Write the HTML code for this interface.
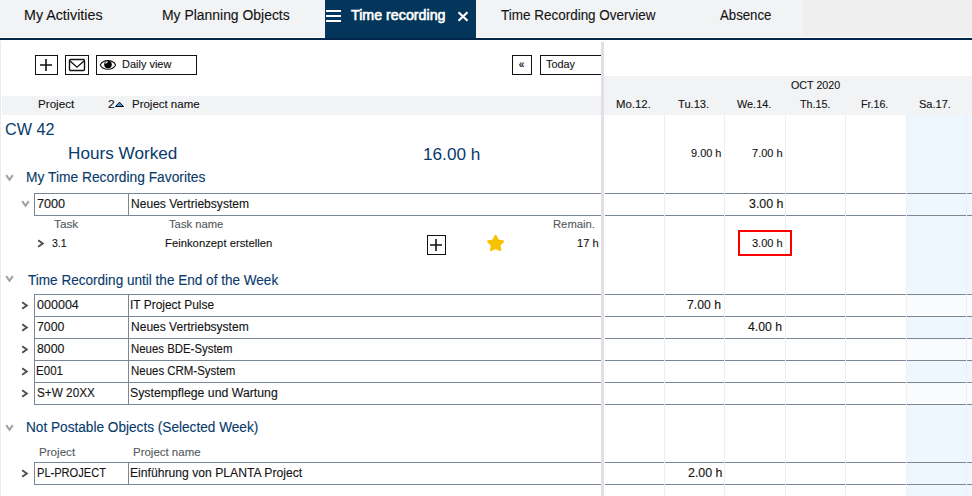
<!DOCTYPE html>
<html><head><meta charset="utf-8"><style>
html,body{margin:0;padding:0;width:972px;height:496px;overflow:hidden;background:#fff;}
body{position:relative;font-family:"Liberation Sans",sans-serif;}
.a{position:absolute;}
.tx{position:absolute;white-space:nowrap;transform-origin:0 0;-webkit-text-stroke:0.12px currentColor;}
.bl{display:inline-block;width:0;height:0;}
</style></head>
<body>
<!-- tab bar -->
<div class="a" style="left:0;top:0;width:803px;height:37px;background:#f2f3f5"></div>
<div class="a" style="left:803px;top:0;width:169px;height:37px;background:#efefef"></div>
<div class="a" style="left:0;top:38px;width:972px;height:2px;background:#00264b"></div>
<div class="a" style="left:325px;top:0;width:151px;height:38px;background:#04365b"></div>
<div class="a" style="left:326px;top:10px;width:14.6px;height:2px;background:#fff"></div>
<div class="a" style="left:326px;top:15px;width:14.6px;height:2px;background:#fff"></div>
<div class="a" style="left:326px;top:20px;width:14.6px;height:2px;background:#fff"></div>
<svg class="a" style="left:456px;top:10px" width="14" height="13" viewBox="0 0 14 13"><path d="M2.5 2.3 L11.5 10.8 M11.5 2.3 L2.5 10.8" stroke="#fff" stroke-width="2.2" fill="none"/></svg>
<!-- left strip -->
<div class="a" style="left:0;top:41px;width:1px;height:455px;background:#ebebeb"></div>
<!-- toolbar buttons -->
<div class="a" style="left:35px;top:55px;width:21px;height:18px;border:1px solid #111"></div>
<svg class="a" style="left:39px;top:58px" width="14" height="14" viewBox="0 0 14 14"><path d="M1 7 H13 M7 1 V13" stroke="#111" stroke-width="1.6" fill="none"/></svg>
<div class="a" style="left:65px;top:55px;width:22px;height:18px;border:1px solid #111"></div>
<svg class="a" style="left:68px;top:58px" width="18" height="14" viewBox="0 0 18 14"><rect x="1.5" y="1.5" width="15" height="11" rx="1.2" fill="none" stroke="#111" stroke-width="1.4"/><path d="M2 3 L9 9.2 L16 3" fill="none" stroke="#111" stroke-width="1.3"/></svg>
<div class="a" style="left:96px;top:55px;width:99px;height:18px;border:1px solid #111"></div>
<svg class="a" style="left:99px;top:59px" width="18" height="12" viewBox="0 0 18 12"><path d="M1.2 5.9 C4 0.2, 13.8 0.2, 16.6 5.9 C13.8 11.6, 4 11.6, 1.2 5.9 Z" fill="none" stroke="#111" stroke-width="1.05"/><circle cx="9" cy="5.5" r="3.8" fill="#000"/><path d="M6.6 4.6 Q7 3 8.6 2.6" fill="none" stroke="#fff" stroke-width="1.1"/></svg>
<div class="a" style="left:512px;top:55px;width:18px;height:18px;border:1px solid #111"></div>
<div class="a" style="left:518.8px;top:57.5px;font-size:10px;line-height:14px;color:#000;-webkit-text-stroke:0.2px #000">&laquo;</div>
<div class="a" style="left:540px;top:55px;width:62px;height:18px;border:1px solid #111;border-right:none"></div>
<!-- headers -->
<div class="a" style="left:2px;top:96px;width:599px;height:19px;background:#f2f3f5"></div>
<div class="a" style="left:604px;top:76px;width:368px;height:39px;background:#f2f3f5"></div>
<svg class="a" style="left:113.5px;top:100px" width="12" height="8" viewBox="0 0 12 8"><path d="M1.5 6.5 L5.5 2.2 L9.5 6.5 Z" fill="#3f9be0" stroke="#000" stroke-width="1"/></svg>
<!-- gantt columns -->
<div class="a" style="left:907px;top:115px;width:65px;height:381px;background:#eef6fe"></div>
<div class="a" style="left:907px;top:295px;width:65px;height:21px;background:#f9fbfe"></div>
<div class="a" style="left:907px;top:339px;width:65px;height:21px;background:#f9fbfe"></div>
<div class="a" style="left:907px;top:383px;width:65px;height:21px;background:#f9fbfe"></div>
<div class="a" style="left:664px;top:115px;width:1px;height:381px;background:#efeff1"></div>
<div class="a" style="left:724px;top:115px;width:1px;height:381px;background:#efeff1"></div>
<div class="a" style="left:785px;top:115px;width:1px;height:381px;background:#efeff1"></div>
<div class="a" style="left:845px;top:115px;width:1px;height:381px;background:#efeff1"></div>
<div class="a" style="left:906px;top:115px;width:1px;height:381px;background:#efeff1"></div>
<div class="a" style="left:966px;top:115px;width:1px;height:381px;background:#efeff1"></div>
<!-- splitter -->
<div class="a" style="left:601px;top:42px;width:3px;height:454px;background:#e3dde8"></div>
<!-- table rows -->
<div class="a" style="left:34px;top:193px;width:567px;height:1px;background:#7b8795"></div>
<div class="a" style="left:605px;top:193px;width:59px;height:1px;background:#7b8795"></div>
<div class="a" style="left:665px;top:193px;width:59px;height:1px;background:#7b8795"></div>
<div class="a" style="left:725px;top:193px;width:60px;height:1px;background:#7b8795"></div>
<div class="a" style="left:786px;top:193px;width:59px;height:1px;background:#7b8795"></div>
<div class="a" style="left:846px;top:193px;width:60px;height:1px;background:#7b8795"></div>
<div class="a" style="left:907px;top:193px;width:59px;height:1px;background:#7b8795"></div>
<div class="a" style="left:967px;top:193px;width:5px;height:1px;background:#7b8795"></div>
<div class="a" style="left:34px;top:215px;width:567px;height:1px;background:#7b8795"></div>
<div class="a" style="left:605px;top:215px;width:59px;height:1px;background:#7b8795"></div>
<div class="a" style="left:665px;top:215px;width:59px;height:1px;background:#7b8795"></div>
<div class="a" style="left:725px;top:215px;width:60px;height:1px;background:#7b8795"></div>
<div class="a" style="left:786px;top:215px;width:59px;height:1px;background:#7b8795"></div>
<div class="a" style="left:846px;top:215px;width:60px;height:1px;background:#7b8795"></div>
<div class="a" style="left:907px;top:215px;width:59px;height:1px;background:#7b8795"></div>
<div class="a" style="left:967px;top:215px;width:5px;height:1px;background:#7b8795"></div>
<div class="a" style="left:34px;top:294px;width:567px;height:1px;background:#7b8795"></div>
<div class="a" style="left:605px;top:294px;width:59px;height:1px;background:#7b8795"></div>
<div class="a" style="left:665px;top:294px;width:59px;height:1px;background:#7b8795"></div>
<div class="a" style="left:725px;top:294px;width:60px;height:1px;background:#7b8795"></div>
<div class="a" style="left:786px;top:294px;width:59px;height:1px;background:#7b8795"></div>
<div class="a" style="left:846px;top:294px;width:60px;height:1px;background:#7b8795"></div>
<div class="a" style="left:907px;top:294px;width:59px;height:1px;background:#7b8795"></div>
<div class="a" style="left:967px;top:294px;width:5px;height:1px;background:#7b8795"></div>
<div class="a" style="left:34px;top:316px;width:567px;height:1px;background:#7b8795"></div>
<div class="a" style="left:605px;top:316px;width:59px;height:1px;background:#7b8795"></div>
<div class="a" style="left:665px;top:316px;width:59px;height:1px;background:#7b8795"></div>
<div class="a" style="left:725px;top:316px;width:60px;height:1px;background:#7b8795"></div>
<div class="a" style="left:786px;top:316px;width:59px;height:1px;background:#7b8795"></div>
<div class="a" style="left:846px;top:316px;width:60px;height:1px;background:#7b8795"></div>
<div class="a" style="left:907px;top:316px;width:59px;height:1px;background:#7b8795"></div>
<div class="a" style="left:967px;top:316px;width:5px;height:1px;background:#7b8795"></div>
<div class="a" style="left:34px;top:338px;width:567px;height:1px;background:#7b8795"></div>
<div class="a" style="left:605px;top:338px;width:59px;height:1px;background:#7b8795"></div>
<div class="a" style="left:665px;top:338px;width:59px;height:1px;background:#7b8795"></div>
<div class="a" style="left:725px;top:338px;width:60px;height:1px;background:#7b8795"></div>
<div class="a" style="left:786px;top:338px;width:59px;height:1px;background:#7b8795"></div>
<div class="a" style="left:846px;top:338px;width:60px;height:1px;background:#7b8795"></div>
<div class="a" style="left:907px;top:338px;width:59px;height:1px;background:#7b8795"></div>
<div class="a" style="left:967px;top:338px;width:5px;height:1px;background:#7b8795"></div>
<div class="a" style="left:34px;top:360px;width:567px;height:1px;background:#7b8795"></div>
<div class="a" style="left:605px;top:360px;width:59px;height:1px;background:#7b8795"></div>
<div class="a" style="left:665px;top:360px;width:59px;height:1px;background:#7b8795"></div>
<div class="a" style="left:725px;top:360px;width:60px;height:1px;background:#7b8795"></div>
<div class="a" style="left:786px;top:360px;width:59px;height:1px;background:#7b8795"></div>
<div class="a" style="left:846px;top:360px;width:60px;height:1px;background:#7b8795"></div>
<div class="a" style="left:907px;top:360px;width:59px;height:1px;background:#7b8795"></div>
<div class="a" style="left:967px;top:360px;width:5px;height:1px;background:#7b8795"></div>
<div class="a" style="left:34px;top:382px;width:567px;height:1px;background:#7b8795"></div>
<div class="a" style="left:605px;top:382px;width:59px;height:1px;background:#7b8795"></div>
<div class="a" style="left:665px;top:382px;width:59px;height:1px;background:#7b8795"></div>
<div class="a" style="left:725px;top:382px;width:60px;height:1px;background:#7b8795"></div>
<div class="a" style="left:786px;top:382px;width:59px;height:1px;background:#7b8795"></div>
<div class="a" style="left:846px;top:382px;width:60px;height:1px;background:#7b8795"></div>
<div class="a" style="left:907px;top:382px;width:59px;height:1px;background:#7b8795"></div>
<div class="a" style="left:967px;top:382px;width:5px;height:1px;background:#7b8795"></div>
<div class="a" style="left:34px;top:404px;width:567px;height:1px;background:#7b8795"></div>
<div class="a" style="left:605px;top:404px;width:59px;height:1px;background:#7b8795"></div>
<div class="a" style="left:665px;top:404px;width:59px;height:1px;background:#7b8795"></div>
<div class="a" style="left:725px;top:404px;width:60px;height:1px;background:#7b8795"></div>
<div class="a" style="left:786px;top:404px;width:59px;height:1px;background:#7b8795"></div>
<div class="a" style="left:846px;top:404px;width:60px;height:1px;background:#7b8795"></div>
<div class="a" style="left:907px;top:404px;width:59px;height:1px;background:#7b8795"></div>
<div class="a" style="left:967px;top:404px;width:5px;height:1px;background:#7b8795"></div>
<div class="a" style="left:34px;top:462px;width:567px;height:1px;background:#7b8795"></div>
<div class="a" style="left:605px;top:462px;width:59px;height:1px;background:#7b8795"></div>
<div class="a" style="left:665px;top:462px;width:59px;height:1px;background:#7b8795"></div>
<div class="a" style="left:725px;top:462px;width:60px;height:1px;background:#7b8795"></div>
<div class="a" style="left:786px;top:462px;width:59px;height:1px;background:#7b8795"></div>
<div class="a" style="left:846px;top:462px;width:60px;height:1px;background:#7b8795"></div>
<div class="a" style="left:907px;top:462px;width:59px;height:1px;background:#7b8795"></div>
<div class="a" style="left:967px;top:462px;width:5px;height:1px;background:#7b8795"></div>
<div class="a" style="left:34px;top:484px;width:567px;height:1px;background:#7b8795"></div>
<div class="a" style="left:605px;top:484px;width:59px;height:1px;background:#7b8795"></div>
<div class="a" style="left:665px;top:484px;width:59px;height:1px;background:#7b8795"></div>
<div class="a" style="left:725px;top:484px;width:60px;height:1px;background:#7b8795"></div>
<div class="a" style="left:786px;top:484px;width:59px;height:1px;background:#7b8795"></div>
<div class="a" style="left:846px;top:484px;width:60px;height:1px;background:#7b8795"></div>
<div class="a" style="left:907px;top:484px;width:59px;height:1px;background:#7b8795"></div>
<div class="a" style="left:967px;top:484px;width:5px;height:1px;background:#7b8795"></div>
<div class="a" style="left:34px;top:193px;width:1px;height:22px;background:#7b8795"></div>
<div class="a" style="left:128px;top:193px;width:1px;height:22px;background:#7b8795"></div>
<div class="a" style="left:34px;top:294px;width:1px;height:22px;background:#7b8795"></div>
<div class="a" style="left:128px;top:294px;width:1px;height:22px;background:#7b8795"></div>
<div class="a" style="left:34px;top:316px;width:1px;height:22px;background:#7b8795"></div>
<div class="a" style="left:128px;top:316px;width:1px;height:22px;background:#7b8795"></div>
<div class="a" style="left:34px;top:338px;width:1px;height:22px;background:#7b8795"></div>
<div class="a" style="left:128px;top:338px;width:1px;height:22px;background:#7b8795"></div>
<div class="a" style="left:34px;top:360px;width:1px;height:22px;background:#7b8795"></div>
<div class="a" style="left:128px;top:360px;width:1px;height:22px;background:#7b8795"></div>
<div class="a" style="left:34px;top:382px;width:1px;height:22px;background:#7b8795"></div>
<div class="a" style="left:128px;top:382px;width:1px;height:22px;background:#7b8795"></div>
<div class="a" style="left:34px;top:462px;width:1px;height:22px;background:#7b8795"></div>
<div class="a" style="left:128px;top:462px;width:1px;height:22px;background:#7b8795"></div>
<!-- chevrons -->
<svg class="a" style="left:5px;top:174px" width="9" height="8" viewBox="0 0 9 8"><path d="M1.2 1.2 L4.5 5.8 L7.8 1.2" fill="none" stroke="#a2a2a2" stroke-width="2.1"/></svg>
<svg class="a" style="left:5px;top:275px" width="9" height="8" viewBox="0 0 9 8"><path d="M1.2 1.2 L4.5 5.8 L7.8 1.2" fill="none" stroke="#a2a2a2" stroke-width="2.1"/></svg>
<svg class="a" style="left:5px;top:424px" width="9" height="8" viewBox="0 0 9 8"><path d="M1.2 1.2 L4.5 5.8 L7.8 1.2" fill="none" stroke="#a2a2a2" stroke-width="2.1"/></svg>
<svg class="a" style="left:21px;top:200px" width="9" height="8" viewBox="0 0 9 8"><path d="M1.2 1.2 L4.5 5.8 L7.8 1.2" fill="none" stroke="#a2a2a2" stroke-width="2.1"/></svg>
<svg class="a" style="left:37px;top:239px" width="8" height="9" viewBox="0 0 8 9"><path d="M1.2 1.2 L5.8 4.5 L1.2 7.8" fill="none" stroke="#4e4e4e" stroke-width="1.9"/></svg>
<svg class="a" style="left:21px;top:301px" width="8" height="9" viewBox="0 0 8 9"><path d="M1.2 1.2 L5.8 4.5 L1.2 7.8" fill="none" stroke="#4e4e4e" stroke-width="1.9"/></svg>
<svg class="a" style="left:21px;top:323px" width="8" height="9" viewBox="0 0 8 9"><path d="M1.2 1.2 L5.8 4.5 L1.2 7.8" fill="none" stroke="#4e4e4e" stroke-width="1.9"/></svg>
<svg class="a" style="left:21px;top:345px" width="8" height="9" viewBox="0 0 8 9"><path d="M1.2 1.2 L5.8 4.5 L1.2 7.8" fill="none" stroke="#4e4e4e" stroke-width="1.9"/></svg>
<svg class="a" style="left:21px;top:367px" width="8" height="9" viewBox="0 0 8 9"><path d="M1.2 1.2 L5.8 4.5 L1.2 7.8" fill="none" stroke="#4e4e4e" stroke-width="1.9"/></svg>
<svg class="a" style="left:21px;top:389px" width="8" height="9" viewBox="0 0 8 9"><path d="M1.2 1.2 L5.8 4.5 L1.2 7.8" fill="none" stroke="#4e4e4e" stroke-width="1.9"/></svg>
<svg class="a" style="left:21px;top:469px" width="8" height="9" viewBox="0 0 8 9"><path d="M1.2 1.2 L5.8 4.5 L1.2 7.8" fill="none" stroke="#4e4e4e" stroke-width="1.9"/></svg>
<!-- task add + star -->
<div class="a" style="left:427px;top:235px;width:17px;height:18px;border:1px solid #111"></div>
<svg class="a" style="left:429px;top:238px" width="14" height="14" viewBox="0 0 14 14"><path d="M1 7 H13 M7 1 V13" stroke="#111" stroke-width="1.6" fill="none"/></svg>
<svg class="a" style="left:485.5px;top:234px" width="20" height="19" viewBox="0 0 20 19"><path d="M9.60 2.00 L11.95 6.56 L17.02 7.39 L13.40 11.04 L14.18 16.11 L9.60 13.80 L5.02 16.11 L5.80 11.04 L2.18 7.39 L7.25 6.56 Z" fill="#f7c300" stroke="#f7c300" stroke-width="2.2" stroke-linejoin="round"/></svg>
<!-- red box -->
<div class="a" style="left:738px;top:230px;width:50px;height:22px;border:2px solid #fc0000"></div>

<div id="t_act" class="tx" style="left:23.78px;top:8.01px;font-size:14px;line-height:14px;font-weight:400;color:#141414;transform:scaleX(1.0197)">My Activities</div>
<div id="t_plan" class="tx" style="left:161.88px;top:8.01px;font-size:14px;line-height:14px;font-weight:400;color:#141414;transform:scaleX(0.9945)">My Planning Objects</div>
<div id="t_tr" class="tx" style="left:351.00px;top:8.01px;font-size:14px;line-height:14px;font-weight:400;color:#ffffff;transform:scaleX(1.0180);-webkit-text-stroke:0.6px currentColor">Time recording</div>
<div id="t_tro" class="tx" style="left:500.89px;top:8.01px;font-size:14px;line-height:14px;font-weight:400;color:#141414;transform:scaleX(0.9626)">Time Recording Overview</div>
<div id="t_abs" class="tx" style="left:719.79px;top:8.01px;font-size:14px;line-height:14px;font-weight:400;color:#141414;transform:scaleX(0.9433)">Absence</div>
<div id="t_daily" class="tx" style="left:122.44px;top:59.01px;font-size:11px;line-height:11px;font-weight:400;color:#141414;transform:scaleX(0.9962)">Daily view</div>
<div id="t_today" class="tx" style="left:546.40px;top:59.01px;font-size:11px;line-height:11px;font-weight:400;color:#141414;transform:scaleX(0.9861)">Today</div>
<div id="h_proj" class="tx" style="left:38.05px;top:99.01px;font-size:11px;line-height:11px;font-weight:400;color:#141414;transform:scaleX(1.0585)">Project</div>
<div id="h_2" class="tx" style="left:107.53px;top:99.01px;font-size:11px;line-height:11px;font-weight:400;color:#141414;transform:scaleX(1.0904)">2</div>
<div id="h_pname" class="tx" style="left:132.27px;top:99.01px;font-size:11px;line-height:11px;font-weight:400;color:#141414;transform:scaleX(1.0424)">Project name</div>
<div id="h_oct" class="tx" style="left:790.89px;top:80.01px;font-size:11px;line-height:11px;font-weight:400;color:#141414;transform:scaleX(0.9735)">OCT 2020</div>
<div id="h_mo" class="tx" style="left:616.25px;top:99.01px;font-size:11px;line-height:11px;font-weight:400;color:#141414;transform:scaleX(1.0354)">Mo.12.</div>
<div id="h_tu" class="tx" style="left:677.85px;top:99.01px;font-size:11px;line-height:11px;font-weight:400;color:#141414;transform:scaleX(1.0124)">Tu.13.</div>
<div id="h_we" class="tx" style="left:736.75px;top:99.01px;font-size:11px;line-height:11px;font-weight:400;color:#141414;transform:scaleX(0.9882)">We.14.</div>
<div id="h_th" class="tx" style="left:799.94px;top:99.01px;font-size:11px;line-height:11px;font-weight:400;color:#141414;transform:scaleX(0.9727)">Th.15.</div>
<div id="h_fr" class="tx" style="left:860.96px;top:99.01px;font-size:11px;line-height:11px;font-weight:400;color:#141414;transform:scaleX(0.9704)">Fr.16.</div>
<div id="h_sa" class="tx" style="left:919.21px;top:99.01px;font-size:11px;line-height:11px;font-weight:400;color:#141414;transform:scaleX(1.0039)">Sa.17.</div>
<div id="b_cw" class="tx" style="left:4.82px;top:122.01px;font-size:16px;line-height:16px;font-weight:400;color:#083a6c;transform:scaleX(1.0118);-webkit-text-stroke:0">CW 42</div>
<div id="b_hw" class="tx" style="left:68.21px;top:145.00px;font-size:17px;line-height:17px;font-weight:400;color:#083a6c;transform:scaleX(1.0088);-webkit-text-stroke:0">Hours Worked</div>
<div id="b_16" class="tx" style="left:423.05px;top:147.01px;font-size:16px;line-height:16px;font-weight:400;color:#083a6c;transform:scaleX(1.0744);-webkit-text-stroke:0">16.00 h</div>
<div id="b_9" class="tx" style="left:691.24px;top:148.01px;font-size:11px;line-height:11px;font-weight:400;color:#141414;transform:scaleX(0.9960)">9.00 h</div>
<div id="b_7" class="tx" style="left:752.45px;top:148.01px;font-size:11px;line-height:11px;font-weight:400;color:#141414;transform:scaleX(1.0019)">7.00 h</div>
<div id="s_fav" class="tx" style="left:26.03px;top:170.01px;font-size:14px;line-height:14px;font-weight:400;color:#083a6c;transform:scaleX(0.9852)">My Time Recording Favorites</div>
<div id="r_7000" class="tx" style="left:36.72px;top:198.00px;font-size:12px;line-height:12px;font-weight:400;color:#141414;transform:scaleX(1.0548)">7000</div>
<div id="r_nv" class="tx" style="left:130.94px;top:198.00px;font-size:12px;line-height:12px;font-weight:400;color:#141414;transform:scaleX(1.0055)">Neues Vertriebsystem</div>
<div id="r_300" class="tx" style="left:748.67px;top:198.00px;font-size:12px;line-height:12px;font-weight:400;color:#141414;transform:scaleX(1.0333)">3.00 h</div>
<div id="k_task" class="tx" style="left:54.33px;top:219.01px;font-size:11px;line-height:11px;font-weight:400;color:#555a60;transform:scaleX(1.0718)">Task</div>
<div id="k_tname" class="tx" style="left:168.83px;top:219.01px;font-size:11px;line-height:11px;font-weight:400;color:#555a60;transform:scaleX(1.0223)">Task name</div>
<div id="k_rem" class="tx" style="left:553.27px;top:219.01px;font-size:11px;line-height:11px;font-weight:400;color:#555a60;transform:scaleX(1.0224)">Remain.</div>
<div id="k_31" class="tx" style="left:51.93px;top:238.01px;font-size:11px;line-height:11px;font-weight:400;color:#141414;transform:scaleX(0.9594)">3.1</div>
<div id="k_fein" class="tx" style="left:164.77px;top:238.01px;font-size:11px;line-height:11px;font-weight:400;color:#141414;transform:scaleX(1.0267)">Feinkonzept erstellen</div>
<div id="k_17" class="tx" style="left:576.67px;top:238.01px;font-size:11px;line-height:11px;font-weight:400;color:#141414;transform:scaleX(1.0113)">17 h</div>
<div id="k_300" class="tx" style="left:752.15px;top:238.01px;font-size:11px;line-height:11px;font-weight:400;color:#141414;transform:scaleX(1.0010)">3.00 h</div>
<div id="s_tre" class="tx" style="left:27.89px;top:273.01px;font-size:14px;line-height:14px;font-weight:400;color:#083a6c;transform:scaleX(0.9684)">Time Recording until the End of the Week</div>
<div id="r1a" class="tx" style="left:37.34px;top:299.00px;font-size:12px;line-height:12px;font-weight:400;color:#141414;transform:scaleX(1.0443)">000004</div>
<div id="r1b" class="tx" style="left:130.34px;top:299.00px;font-size:12px;line-height:12px;font-weight:400;color:#141414;transform:scaleX(0.9956)">IT Project Pulse</div>
<div id="r1g" class="tx" style="left:687.49px;top:299.00px;font-size:12px;line-height:12px;font-weight:400;color:#141414;transform:scaleX(1.0179)">7.00 h</div>
<div id="r2a" class="tx" style="left:37.30px;top:321.00px;font-size:12px;line-height:12px;font-weight:400;color:#141414;transform:scaleX(1.0222)">7000</div>
<div id="r2b" class="tx" style="left:130.94px;top:321.00px;font-size:12px;line-height:12px;font-weight:400;color:#141414;transform:scaleX(1.0024)">Neues Vertriebsystem</div>
<div id="r2g" class="tx" style="left:748.48px;top:321.00px;font-size:12px;line-height:12px;font-weight:400;color:#141414;transform:scaleX(1.0226)">4.00 h</div>
<div id="r3a" class="tx" style="left:36.66px;top:343.00px;font-size:12px;line-height:12px;font-weight:400;color:#141414;transform:scaleX(1.0290)">8000</div>
<div id="r3b" class="tx" style="left:131.27px;top:343.00px;font-size:12px;line-height:12px;font-weight:400;color:#141414;transform:scaleX(0.9509)">Neues BDE-System</div>
<div id="r4a" class="tx" style="left:36.23px;top:365.00px;font-size:12px;line-height:12px;font-weight:400;color:#141414;transform:scaleX(0.9646)">E001</div>
<div id="r4b" class="tx" style="left:131.27px;top:365.00px;font-size:12px;line-height:12px;font-weight:400;color:#141414;transform:scaleX(0.9544)">Neues CRM-System</div>
<div id="r5a" class="tx" style="left:36.89px;top:387.00px;font-size:12px;line-height:12px;font-weight:400;color:#141414;transform:scaleX(0.9802)">S+W 20XX</div>
<div id="r5b" class="tx" style="left:130.07px;top:387.00px;font-size:12px;line-height:12px;font-weight:400;color:#141414;transform:scaleX(1.0237)">Systempflege und Wartung</div>
<div id="s_np" class="tx" style="left:26.03px;top:420.01px;font-size:14px;line-height:14px;font-weight:400;color:#083a6c;transform:scaleX(0.9734)">Not Postable Objects (Selected Week)</div>
<div id="n_proj" class="tx" style="left:39.05px;top:447.01px;font-size:11px;line-height:11px;font-weight:400;color:#555a60;transform:scaleX(1.0550)">Project</div>
<div id="n_pname" class="tx" style="left:132.77px;top:447.01px;font-size:11px;line-height:11px;font-weight:400;color:#555a60;transform:scaleX(1.0424)">Project name</div>
<div id="n_pl" class="tx" style="left:36.77px;top:467.00px;font-size:12px;line-height:12px;font-weight:400;color:#141414;transform:scaleX(0.9225)">PL-PROJECT</div>
<div id="n_ein" class="tx" style="left:130.35px;top:467.00px;font-size:12px;line-height:12px;font-weight:400;color:#141414;transform:scaleX(1.0137)">Einführung von PLANTA Project</div>
<div id="n_200" class="tx" style="left:687.70px;top:467.00px;font-size:12px;line-height:12px;font-weight:400;color:#141414;transform:scaleX(1.0344)">2.00 h</div>
</body></html>
